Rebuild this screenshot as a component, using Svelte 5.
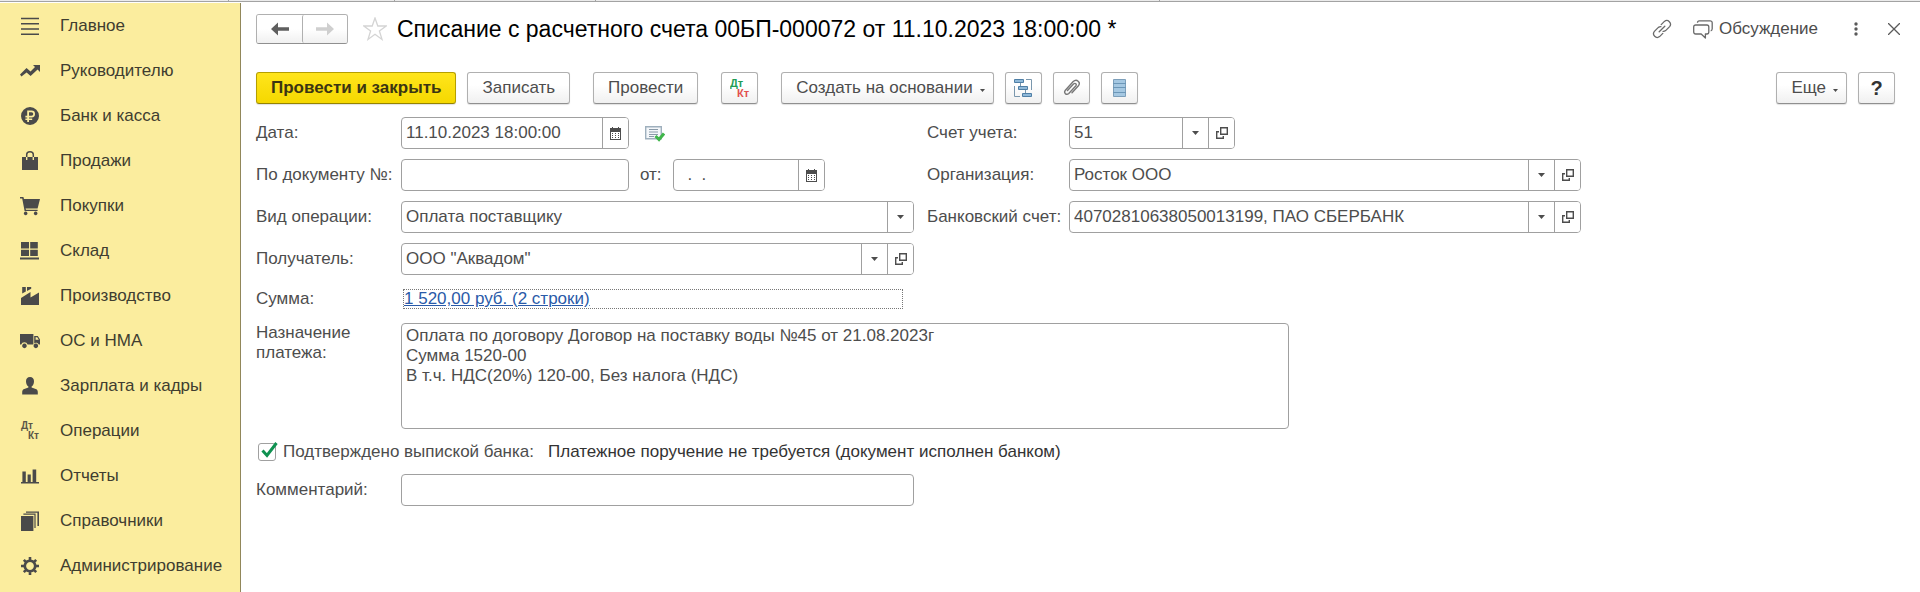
<script lang="ts">
  interface Section {
    label: string;
    fill?: string;
    line?: string;
    weight?: number;
    letters?: boolean;
  }

  const sections: Section[] = [
    { label: 'Главное', line: 'M1 2.5h18M1 7.8h18M1 13h18M1 18.2h18' },
    {
      label: 'Руководителю',
      fill: 'M0 13.6 6.5 7l4 3.4L15 6l-2-2h7v7l-2.4-2.4-7 6.4-4-3.6L1.4 15.4z'
    },
    {
      label: 'Банк и касса',
      fill: 'M10 1a9 9 0 1 0 0 18 9 9 0 0 0 0-18zM7.2 4.6h4.4a3.3 3.3 0 0 1 0 6.8H9v1.2h3.2v1.5H9V16H7.2v-1.9H5.4v-1.5h1.8v-1.2H5.4V9.8h1.8zM9 6.2v3.6h2.5a1.8 1.8 0 0 0 0-3.6z'
    },
    {
      label: 'Продажи',
      fill: 'M2 6h4v3h1.4V6h5.2v3H14V6h4v13H2z',
      line: 'M6.7 6V3.6a3.3 2.8 0 0 1 6.6 0V6'
    },
    {
      label: 'Покупки',
      fill: 'M0 1h3.4l.6 2h16l-2.4 9.4H5.6l.4 1.4h11.6V15H4.6L2.2 2.6H0zM5.6 15.6a1.8 1.8 0 1 0 .1 0zM15.6 15.6a1.8 1.8 0 1 0 .1 0z'
    },
    { label: 'Склад', fill: 'M1 1h8v6.5H1zM10.2 1h7.6v6.5h-7.6zM1 8.8h8V15H1zM10.2 8.8h7.6V15h-7.6zM0 16.6h19v2H0z' },
    {
      label: 'Производство',
      fill: 'M1 19v-7l9.5-6v5.4L19 6.4V19zM2.2 1h3.6v4.4L2.2 7.6zM7 1h4.2v1.8L7 5z'
    },
    {
      label: 'ОС и НМА',
      fill: 'M0 3h13.4v10.6H7.6a3.4 3.4 0 0 0-6.4 0H0zM14.2 5h3.6L20 8.6v5h-1.2a3.2 3.2 0 0 0-4.6-1.4zM15.6 6.2v2.6h3.2l-1.6-2.6zM4.4 12.6a2.3 2.3 0 1 0 .1 0zM15.8 12.6a2.3 2.3 0 1 0 .1 0z'
    },
    {
      label: 'Зарплата и кадры',
      fill: 'M10 1c2.6 0 4 1.8 4 4.2 0 2.2-1 4.6-2.4 5.4v.8l4.8 1.8c1 .5 1.4 1.6 1.4 2.8v2.6H2.2V16c0-1.2.4-2.3 1.4-2.8l4.8-1.8v-.8C7 9.8 6 7.4 6 5.2 6 2.8 7.4 1 10 1z'
    },
    { label: 'Операции', letters: true },
    { label: 'Отчеты', fill: 'M2.4 5.6h3.4V16h1.8V8.6h3.2V16h1.8V3.4h3.6V16H19v1.6H1V16h1.4z' },
    {
      label: 'Справочники',
      fill: 'M1 5h12.4v15H1zM3.4 2.6h12.2V17h-1.2V3.8h-11zM6 .4h13V15h-1.6V1.8H6z'
    },
    {
      label: 'Администрирование',
      line: 'M10 4.8a5.2 5.2 0 1 0 .01 0M10 1v3M10 16v3M1 10h3M16 10h3M3.8 3.8l2 2M14.2 14.2l2 2M3.8 16.2l2-2M14.2 5.8l2-2',
      weight: 2.6
    }
  ];

  let date = $state('11.10.2023 18:00:00');
  let docNumber = $state('');
  let docDate = $state('  .  .');
  let confirmed = $state(true);
  let comment = $state('');
  let purpose = $state(
    'Оплата по договору Договор на поставку воды №45 от 21.08.2023г\nСумма 1520-00\nВ т.ч. НДС(20%) 120-00, Без налога (НДС)'
  );
</script>

{#snippet calendar()}
  <button class="pick" type="button" aria-label="Выбрать дату">
    <svg width="11" height="13" viewBox="0 0 11 13">
      <path fill="#4d4d4d" fill-rule="evenodd" d="M0 1h2V0h1v1h5V0h1v1h2v12H0zM1 5v7h9V5z" />
      <path fill="#4d4d4d" d="M2 6h1v1H2zM5 6h1v1H5zM8 6h1v1H8zM2 8h1v1H2zM5 8h1v1H5zM8 8h1v1H8zM2 10h1v1H2zM5 10h1v1H5zM8 10h1v1H8z" />
    </svg>
  </button>
{/snippet}

{#snippet dropdown(id: string, value: string, open: boolean)}
  <div class="field">
    <div class="select">
      <select {id}><option>{value}</option></select>
      <span class="pick arrow">
        <svg width="7" height="4" viewBox="0 0 7 4"><path fill="#4d4d4d" d="M0 0h7L3.500 4z" /></svg>
      </span>
    </div>
    {#if open}
      <button class="pick" type="button" aria-label="Открыть">
        <svg width="12" height="12" viewBox="0 0 12 12" fill="none" stroke="#4d4d4d" stroke-width="1.4">
          <path d="M4.700.7h6.600v6.600H4.700zM3 4.700H.7v6.600h6.600V9" />
        </svg>
      </button>
    {/if}
  </div>
{/snippet}

<div class="tabs"><i></i><i></i><i></i><i></i><i></i></div>

<div class="app">
  <nav class="sections">
    {#each sections as section}
      <a href="#section">
        <svg width="20" height="20" viewBox="0 0 20 20">
          {#if section.fill}
            <path fill="#4a4a4a" fill-rule="evenodd" d={section.fill} />
          {/if}
          {#if section.line}
            <path fill="none" stroke="#4a4a4a" stroke-width={section.weight ?? 1.5} d={section.line} />
          {/if}
          {#if section.letters}
            <text class="letters" x="1" y="8">Дт</text>
            <text class="letters" x="8" y="18">Кт</text>
          {/if}
        </svg>
        {section.label}
      </a>
    {/each}
  </nav>

  <main>
    <header>
      <div class="history">
        <button type="button" aria-label="Назад">
          <svg width="18" height="14" viewBox="0 0 18 14"><path fill="#5f5f5f" d="M0 7 7 .5v4.700h11v3.600H7v4.700z" /></svg>
        </button>
        <button type="button" aria-label="Вперед">
          <svg width="18" height="14" viewBox="0 0 18 14"><path fill="#cfcfcf" d="M18 7 11 .5v4.700H0v3.600h11v4.700z" /></svg>
        </button>
      </div>
      <button class="plain star" type="button" aria-label="В избранное">
        <svg width="24" height="24" viewBox="0 0 24 24" fill="none" stroke="#d4d4d4" stroke-width="1.3">
          <path d="m12 1 2.800 8h8.400l-6.800 5 2.600 8.400-7-5.200-7 5.200L7.600 14 .8 9h8.400z" />
        </svg>
      </button>
      <h1>Списание с расчетного счета 00БП-000072 от 11.10.2023 18:00:00 *</h1>
      <div class="window">
        <button class="plain" type="button" aria-label="Ссылка">
          <svg width="20" height="20" viewBox="0 0 20 20" fill="none" stroke="#6a6a6a" stroke-width="1.3" stroke-linecap="round">
            <path d="m9.200 5.600 3.200-3.200a3.700 3.700 0 0 1 5.200 5.200l-4 4M10.800 14.400l-3.200 3.200a3.700 3.700 0 0 1-5.200-5.200l4-4M7.200 12.800l5.600-5.600M13.600 11.600c-.8.6-1.600.9-2.500.8M6.400 8.400c.8-.6 1.600-.9 2.500-.8" />
          </svg>
        </button>
        <button class="plain discuss" type="button">
          <svg width="20" height="19" viewBox="0 0 20 19" fill="none" stroke="#6a6a6a" stroke-width="1.3" stroke-linejoin="round">
            <path d="M2.600 5h11.300a1.900 1.900 0 0 1 1.900 1.900v5.200a1.900 1.900 0 0 1-1.900 1.900h-1.500v4L8.200 14H2.600a1.900 1.900 0 0 1-1.900-1.900V6.900A1.900 1.900 0 0 1 2.600 5z" />
            <path d="M4.500 2.800c0-1.300.6-2 1.800-2h10.800a2 2 0 0 1 2.100 2v6c0 1.200-.6 1.900-1.500 2" />
          </svg>
          Обсуждение
        </button>
        <button class="plain dots" type="button" aria-label="Меню">
          <svg width="4" height="14" viewBox="0 0 4 14" fill="#5a5a5a">
            <circle cx="2" cy="2" r="1.700" /><circle cx="2" cy="7" r="1.700" /><circle cx="2" cy="12" r="1.700" />
          </svg>
        </button>
        <button class="plain" type="button" aria-label="Закрыть">
          <svg width="12" height="12" viewBox="0 0 12 12" stroke="#5a5a5a" stroke-width="1.3"><path d="m0 0 12 12M12 0 0 12" /></svg>
        </button>
      </div>
    </header>

    <div class="toolbar">
      <div class="group">
        <button class="btn primary" type="button">Провести и закрыть</button>
        <button class="btn" type="button">Записать</button>
      </div>
      <button class="btn" type="button">Провести</button>
      <button class="btn icon" type="button" aria-label="Проводки">
        <svg width="20" height="26" viewBox="0 0 20 26">
          <text class="entry debit" x="0" y="12">Дт</text>
          <text class="entry credit" x="7" y="22">Кт</text>
        </svg>
      </button>
      <div class="group">
        <button class="btn menu" type="button">
          Создать на основании
          <svg class="caret" width="5" height="3" viewBox="0 0 5 3"><path fill="#4d4d4d" d="M0 0h5L2.500 3z" /></svg>
        </button>
        <button class="btn icon" type="button" aria-label="Структура подчиненности">
          <svg width="18" height="18" viewBox="0 0 18 18" fill="#8fb8d8" stroke="#4f7fa6">
            <path d="M.5.5h9v3h-9zM4.500 7.500h9v3h-9zM8.500 14.500h9v3h-9z" />
            <path fill="none" stroke="#7a97ad" d="M12 .5h5.500V11M.5 7v10.500H6M6.500 4v3M11.500 11v3" />
          </svg>
        </button>
        <button class="btn icon" type="button" aria-label="Присоединенные файлы">
          <svg width="17" height="18" viewBox="0 0 17 18" fill="none" stroke="#777" stroke-width="1.4" stroke-linecap="round">
            <path d="m4.500 11.500 6-6.400c1.800-1.700 3.600.2 2.200 1.900l-6.900 7.400c-2.500 2.300-5.500-.6-3.400-3.200l7.800-8.600c3.600-3.400 7.800.8 5.200 4.200l-6.400 7" />
          </svg>
        </button>
        <button class="btn icon" type="button" aria-label="Реестр">
          <svg width="13" height="18" viewBox="0 0 13 18">
            <path fill="#a5c8e2" stroke="#7d9fba" d="M.5.500h12v17H.5z" />
            <path stroke="#6c97b8" d="M0 4.500h13M0 8.500h13M0 13.500h13" />
          </svg>
        </button>
      </div>
      <div class="group end">
        <button class="btn menu" type="button">
          Еще
          <svg class="caret" width="5" height="3" viewBox="0 0 5 3"><path fill="#4d4d4d" d="M0 0h5L2.500 3z" /></svg>
        </button>
        <button class="btn icon help" type="button">?</button>
      </div>
    </div>

    <form>
      <div class="columns">
        <div class="column">
          <div class="row">
            <label for="date">Дата:</label>
            <div class="field date">
              <input id="date" type="text" bind:value={date} />
              {@render calendar()}
            </div>
            <svg class="posted" width="20" height="17" viewBox="0 0 20 17">
              <path fill="#f4f7fa" stroke="#9fb0bd" stroke-width="1.4" d="M.7 1.700h15.600v12H.7z" />
              <path stroke="#8a9aa8" d="M4 4.500h9M4 7h9M4 9.500h9M4 11.500h5" />
              <path fill="none" stroke="#3fb54a" stroke-width="3" d="m10.500 11 3.500 3.500 5-6" />
            </svg>
          </div>
          <div class="row">
            <label for="number">По документу №:</label>
            <div class="field date"><input id="number" type="text" bind:value={docNumber} /></div>
            <label class="from" for="from">от:</label>
            <div class="field short">
              <input id="from" type="text" bind:value={docDate} />
              {@render calendar()}
            </div>
          </div>
          <div class="row">
            <label for="operation">Вид операции:</label>
            {@render dropdown('operation', 'Оплата поставщику', false)}
          </div>
          <div class="row">
            <label for="recipient">Получатель:</label>
            {@render dropdown('recipient', 'ООО "Аквадом"', true)}
          </div>
        </div>
        <div class="column right">
          <div class="row account">
            <label for="account">Счет учета:</label>
            {@render dropdown('account', '51', true)}
          </div>
          <div class="row">
            <label for="company">Организация:</label>
            {@render dropdown('company', 'Росток ООО', true)}
          </div>
          <div class="row">
            <label for="bank">Банковский счет:</label>
            {@render dropdown('bank', '40702810638050013199, ПАО СБЕРБАНК', true)}
          </div>
        </div>
      </div>

      <div class="row sum">
        <span class="caption">Сумма:</span>
        <div class="sum-box"><a href="#sum">1 520,00 руб. (2 строки)</a></div>
      </div>

      <div class="row purpose">
        <label for="purpose">Назначение платежа:</label>
        <textarea id="purpose" bind:value={purpose}></textarea>
      </div>

      <div class="confirm">
        <label class="check">
          <input type="checkbox" bind:checked={confirmed} />
          <svg width="17" height="17" viewBox="0 0 17 17" fill="none" stroke="#0f9150" stroke-width="3">
            <path d="m1.500 8.500 4.500 5L15.500 1" />
          </svg>
          Подтверждено выпиской банка:
        </label>
        <span class="status">Платежное поручение не требуется (документ исполнен банком)</span>
      </div>

      <div class="row comment">
        <label for="comment">Комментарий:</label>
        <div class="field"><input id="comment" type="text" bind:value={comment} /></div>
      </div>
    </form>
  </main>
</div>

<style>
  :global(body) {
    background: #fff;
  }

  :global(#app) {
    display: flex;
    flex-direction: column;
    min-height: 100vh;
    font-family: 'Liberation Sans', Arial, sans-serif;
    font-size: 17px;
    line-height: 20px;
    color: #4d4d4d;
  }

  button,
  input,
  select,
  textarea {
    box-sizing: border-box;
    margin: 0;
    padding: 0;
    font: inherit;
    color: inherit;
  }

  svg {
    display: block;
    flex: none;
  }

  .tabs {
    display: grid;
    grid-template-columns: 229fr 166fr 201fr 564fr 760fr;
    height: 1px;
    margin-bottom: 1px;
    background: #ebebeb;
    border-bottom: 1px solid #a3a3a3;
  }

  .tabs i {
    border-right: 1px solid #a3a3a3;
  }

  .tabs i:last-child {
    border-right: 0;
  }

  .app {
    display: flex;
    flex: 1;
  }

  .sections {
    flex: none;
    width: 240px;
    background: #fbed9e;
    border-right: 1px solid #91875a;
  }

  .sections a {
    display: flex;
    align-items: center;
    gap: 20px;
    height: 45px;
    padding-left: 20px;
    color: #403d30;
    text-decoration: none;
  }

  .letters {
    font-size: 10px;
    font-weight: 700;
    fill: #5a5748;
  }

  main {
    flex: 1;
    min-width: 0;
    padding: 11px 25px 0 15px;
  }

  header {
    display: flex;
    align-items: center;
    height: 30px;
  }

  .history {
    display: flex;
    border: 1px solid #b0b0b0;
    border-bottom-color: #8f8f8f;
    border-radius: 3px;
  }

  .history button {
    display: flex;
    align-items: center;
    justify-content: center;
    width: 45px;
    height: 28px;
    background: linear-gradient(#fff 50%, #f0f0f0);
    border: 0;
    border-radius: 2px;
  }

  .history button + button {
    border-left: 1px solid #b0b0b0;
  }

  .plain {
    display: flex;
    align-items: center;
    background: none;
    border: 0;
  }

  .star {
    margin: 0 10px 0 15px;
  }

  h1 {
    margin: 0;
    font-size: 23px;
    font-weight: 400;
    line-height: 28px;
    color: #000;
    white-space: nowrap;
  }

  .window {
    display: flex;
    align-items: center;
    margin: 0 -5px 0 auto;
  }

  .discuss {
    gap: 6px;
    margin-left: 21px;
  }

  .dots {
    margin: 0 30px 0 36px;
  }

  .toolbar {
    display: flex;
    gap: 23px;
    margin-top: 28px;
  }

  .group {
    display: flex;
    gap: 11px;
  }

  .end {
    margin-left: auto;
  }

  .btn {
    display: flex;
    align-items: center;
    justify-content: center;
    gap: 7px;
    height: 32px;
    padding: 0 14px;
    white-space: nowrap;
    background: linear-gradient(#fff 40%, #f0f0f0);
    border: 1px solid #b0b0b0;
    border-bottom-color: #8f8f8f;
    border-radius: 3px;
    box-shadow: 0 1px 1px #0000001f;
  }

  .primary {
    font-weight: 700;
    color: #3b3512;
    background: linear-gradient(#ffe51c, #f5d800);
    border-color: #b59f00;
    border-bottom-color: #958300;
  }

  .menu {
    padding: 0 8px 0 14px;
  }

  .icon {
    width: 37px;
    padding: 0;
  }

  .help {
    font-size: 20px;
    font-weight: 700;
    color: #333;
  }

  .caret {
    margin-top: 4px;
  }

  .entry {
    font-size: 11px;
    font-weight: 700;
  }

  .debit {
    fill: #1f9d55;
  }

  .credit {
    fill: #e2504e;
  }

  form {
    padding-top: 13px;
  }

  .columns {
    display: grid;
    grid-template-columns: minmax(0, 658px) minmax(0, 654px);
    gap: 13px;
  }

  .column {
    display: flex;
    flex-direction: column;
    gap: 10px;
  }

  .row,
  .confirm {
    display: flex;
    align-items: center;
  }

  .row > label:first-child,
  .caption {
    flex: none;
    width: 145px;
  }

  .right .row > label:first-child {
    width: 142px;
  }

  .account {
    max-width: 308px;
  }

  .field {
    display: flex;
    flex: 1;
    box-sizing: border-box;
    height: 32px;
    min-width: 0;
    background: #fff;
    border: 1px solid #a0a0a0;
    border-radius: 4px;
    overflow: hidden;
  }

  .field input,
  .field select {
    flex: 1;
    width: 100%;
    min-width: 0;
    height: 30px;
    padding: 0 4px;
    appearance: none;
    background: none;
    border: 0;
    outline: 0;
  }

  .select {
    display: flex;
    position: relative;
    flex: 1;
    min-width: 0;
  }

  .pick {
    display: flex;
    flex: none;
    box-sizing: border-box;
    align-items: center;
    justify-content: center;
    width: 26px;
    height: 30px;
    background: #fff;
    border: 0;
    border-left: 1px solid #a0a0a0;
  }

  .arrow {
    position: absolute;
    top: 0;
    right: 0;
    pointer-events: none;
  }

  .date {
    flex: 0 1 228px;
  }

  .short {
    flex: 0 1 152px;
  }

  .from {
    width: 33px;
    margin-left: 11px;
  }

  .posted {
    margin-left: 16px;
  }

  .sum {
    margin-top: 14px;
  }

  .sum-box {
    flex: 0 1 498px;
    margin-left: 2px;
    line-height: 18px;
    border: 1px dotted #777;
  }

  .sum-box a {
    color: #2a5aa8;
  }

  .purpose {
    align-items: flex-start;
    margin-top: 14px;
  }

  .purpose label {
    padding-right: 20px;
    box-sizing: border-box;
  }

  textarea {
    flex: 0 1 888px;
    min-width: 0;
    height: 106px;
    padding: 2px 4px;
    background: #fff;
    border: 1px solid #a0a0a0;
    border-radius: 4px;
    outline: 0;
    resize: none;
  }

  .confirm {
    gap: 14px;
    margin-top: 13px;
  }

  .check {
    display: flex;
    position: relative;
    align-items: center;
    gap: 7px;
    padding-left: 2px;
  }

  .check input {
    width: 18px;
    height: 18px;
    appearance: none;
    background: #fff;
    border: 1px solid #a0a0a0;
    border-radius: 3px;
  }

  .check svg {
    position: absolute;
    top: 0;
    left: 5px;
    visibility: hidden;
    pointer-events: none;
  }

  .check input:checked + svg {
    visibility: visible;
  }

  .status {
    color: #333;
  }

  .comment {
    max-width: 658px;
    margin-top: 12px;
  }
</style>
